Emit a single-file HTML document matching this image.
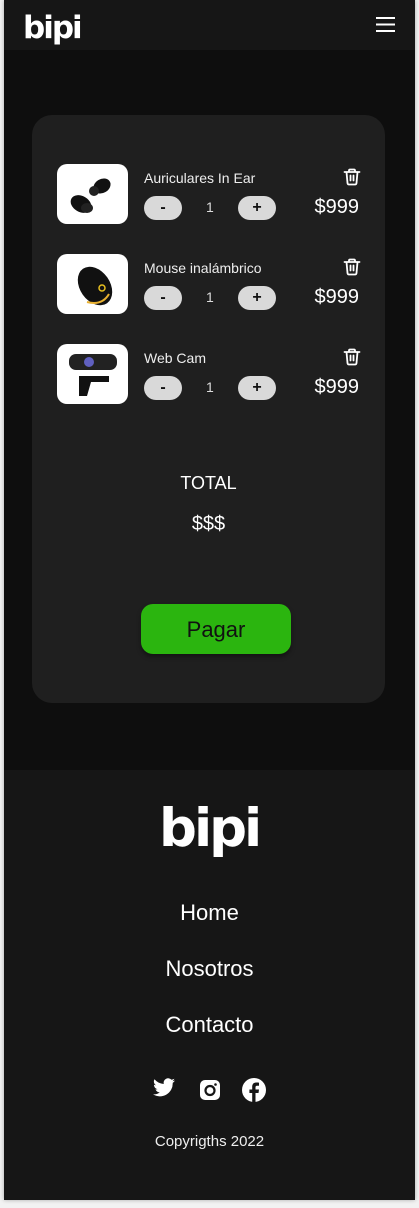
<!DOCTYPE html>
<html><head><meta charset="utf-8"><style>
*{margin:0;padding:0;box-sizing:border-box}
html,body{width:419px;height:1208px;background:#f2f2f2;overflow:hidden;font-family:"Liberation Sans",sans-serif;color:#fff}
.wrap{position:absolute;left:4px;top:0;width:411px;height:1200px;background:#0e0e0e;box-shadow:0 0 4px rgba(0,0,0,.3)}
.hdr{position:absolute;left:0;top:0;width:411px;height:50px;background:#161616}
.card{position:absolute;left:28px;top:115px;width:353px;height:588px;background:#1f1f1f;border-radius:20px}
.row{position:absolute;left:0;width:353px;height:60px}
.img{position:absolute;left:25px;top:0;width:71px;height:60px;background:#fff;border-radius:10px;overflow:hidden}
.name{position:absolute;left:112px;top:6px;font-size:14px;color:#eee}
.btn{position:absolute;top:32px;width:38px;height:24px;border-radius:12px;background:#d9d9d9;color:#111;font-size:16px;font-weight:bold;text-align:center;line-height:24px}
.q{position:absolute;left:174px;top:35px;font-size:14px;color:#ddd}
.price{position:absolute;right:26px;top:32px;font-size:20px;color:#fff}
.trash{position:absolute;left:310px;top:3px}
.ftr{position:absolute;left:0;top:770px;width:411px;height:430px;background:#161616}
.c{position:absolute;left:0;width:411px;text-align:center}
</style></head><body>
<div class="wrap">
<div class="hdr">
<svg style="position:absolute;left:19px;top:8px" width="66" height="40"><text x="0" y="30" font-family="DejaVu Sans" font-weight="bold" font-size="31" fill="#fff" letter-spacing="-2">bipi</text></svg>
<svg style="position:absolute;left:372px;top:16px" width="20" height="17"><path d="M0 2H19M0 8.5H19M0 15H19" stroke="#fff" stroke-width="2"/></svg>
</div>
<div class="card">
 <div class="row" style="top:49px">
  <div class="img"><svg width="71" height="60"><ellipse cx="24" cy="40" rx="11" ry="8" fill="#111" transform="rotate(30 24 40)"/><ellipse cx="30" cy="44" rx="6" ry="5" fill="#222"/><ellipse cx="45" cy="22" rx="9" ry="7" fill="#111" transform="rotate(-30 45 22)"/><circle cx="37" cy="27" r="5" fill="#222"/></svg></div>
  <div class="name">Auriculares In Ear</div>
  <div class="btn" style="left:112px">-</div><div class="q">1</div><div class="btn" style="left:206px">+</div>
  <div class="price">$999</div>
  <svg class="trash" width="20" height="20" viewBox="0 0 20 20"><path d="M2.5 5H17.5M7 5V3.5Q7 2.5 8 2.5H12Q13 2.5 13 3.5V5M4.5 5L5.5 16Q5.6 17.5 7 17.5H13Q14.4 17.5 14.5 16L15.5 5M8.5 8.5V13.5M11.5 8.5V13.5" stroke="#fff" stroke-width="1.8" fill="none" stroke-linecap="round" stroke-linejoin="round"/></svg>
 </div>
 <div class="row" style="top:139px">
  <div class="img"><svg width="71" height="60"><ellipse cx="38" cy="32" rx="15" ry="21" fill="#111" transform="rotate(-35 38 32)"/><path d="M30 48Q45 52 52 40" stroke="#e8b030" stroke-width="2" fill="none"/><circle cx="45" cy="34" r="3" fill="none" stroke="#e8c020" stroke-width="1.5"/></svg></div>
  <div class="name">Mouse inalámbrico</div>
  <div class="btn" style="left:112px">-</div><div class="q">1</div><div class="btn" style="left:206px">+</div>
  <div class="price">$999</div>
  <svg class="trash" width="20" height="20" viewBox="0 0 20 20"><path d="M2.5 5H17.5M7 5V3.5Q7 2.5 8 2.5H12Q13 2.5 13 3.5V5M4.5 5L5.5 16Q5.6 17.5 7 17.5H13Q14.4 17.5 14.5 16L15.5 5M8.5 8.5V13.5M11.5 8.5V13.5" stroke="#fff" stroke-width="1.8" fill="none" stroke-linecap="round" stroke-linejoin="round"/></svg>
 </div>
 <div class="row" style="top:229px">
  <div class="img"><svg width="71" height="60"><rect x="12" y="10" width="48" height="16" rx="7" fill="#222"/><circle cx="32" cy="18" r="5" fill="#6060c0"/><path d="M22 32H52V38H34L30 52H22Z" fill="#111"/></svg></div>
  <div class="name">Web Cam</div>
  <div class="btn" style="left:112px">-</div><div class="q">1</div><div class="btn" style="left:206px">+</div>
  <div class="price">$999</div>
  <svg class="trash" width="20" height="20" viewBox="0 0 20 20"><path d="M2.5 5H17.5M7 5V3.5Q7 2.5 8 2.5H12Q13 2.5 13 3.5V5M4.5 5L5.5 16Q5.6 17.5 7 17.5H13Q14.4 17.5 14.5 16L15.5 5M8.5 8.5V13.5M11.5 8.5V13.5" stroke="#fff" stroke-width="1.8" fill="none" stroke-linecap="round" stroke-linejoin="round"/></svg>
 </div>
 <div style="position:absolute;left:0;width:353px;top:358px;text-align:center;font-size:18px">TOTAL</div>
 <div style="position:absolute;left:0;width:353px;top:398px;text-align:center;font-size:20px">$$$</div>
 <div style="position:absolute;left:109px;top:489px;width:150px;height:50px;background:#2bb50f;border-radius:12px;color:#111;font-size:22px;text-align:center;line-height:52px;box-shadow:0 3px 5px rgba(0,0,0,.4)">Pagar</div>
</div>
<div class="ftr">
 <svg style="position:absolute;left:152px;top:26px" width="110" height="70"><text x="3" y="50" font-family="DejaVu Sans" font-weight="bold" font-size="53" fill="#fff" letter-spacing="-3">bipi</text></svg>
 <div class="c" style="top:130px;font-size:22px">Home</div>
 <div class="c" style="top:186px;font-size:22px">Nosotros</div>
 <div class="c" style="top:242px;font-size:22px">Contacto</div>
 <svg style="position:absolute;left:148px;top:308px" width="24" height="20" viewBox="0 0 24 20"><path d="M23 2.5a9 9 0 0 1-2.6.7 4.5 4.5 0 0 0 2-2.5 9 9 0 0 1-2.9 1.1A4.5 4.5 0 0 0 11.8 6 12.8 12.8 0 0 1 2.5 1.3a4.5 4.5 0 0 0 1.4 6 4.5 4.5 0 0 1-2-.6 4.5 4.5 0 0 0 3.6 4.5 4.5 4.5 0 0 1-2 .1 4.5 4.5 0 0 0 4.2 3.1A9 9 0 0 1 1 16.3a12.8 12.8 0 0 0 19.7-11.4A9 9 0 0 0 23 2.5z" fill="#fff"/></svg>
 <svg style="position:absolute;left:196px;top:310px" width="20" height="20" viewBox="0 0 20 20"><rect x="0" y="0" width="20" height="20" rx="5" fill="#fff"/><circle cx="10" cy="10.5" r="4.5" fill="none" stroke="#161616" stroke-width="2.2"/><circle cx="15.5" cy="4.5" r="1.3" fill="#161616"/></svg>
 <svg style="position:absolute;left:238px;top:308px" width="24" height="24" viewBox="0 0 24 24"><circle cx="12" cy="12" r="12" fill="#fff"/><path d="M13.5 24V15H16.5L17 11.5H13.5V9.5C13.5 8.5 13.8 7.8 15.3 7.8H17V4.7C16.7 4.6 15.6 4.5 14.4 4.5 11.9 4.5 10.2 6 10.2 8.8V11.5H7.4V15H10.2V24Z" fill="#161616"/></svg>
 <div class="c" style="top:363px;font-size:15px;color:#eee">Copyrigths 2022</div>
</div>
</div>
</body></html>
